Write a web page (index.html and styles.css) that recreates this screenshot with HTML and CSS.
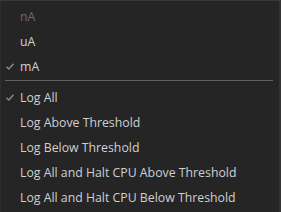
FILE: index.html
```html
<!DOCTYPE html>
<html lang="en">
<head>
  <meta charset="UTF-8">
  <title>Menu</title>
  <link rel="stylesheet" href="styles.css">
</head>
<body>
  <div class="menu">
    <div class="item disabled"><span class="check"></span>nA</div>
    <div class="item"><span class="check"></span>uA</div>
    <div class="item"><span class="check"><svg width="8" height="7" viewBox="0 0 8 7"><polyline points="0.5,3.8 2.8,6 7.5,0.8" fill="none" stroke="#8c8c8c" stroke-width="1.3"/></svg></span>mA</div>
    <div class="sep"></div>
    <div class="item"><span class="check"><svg width="8" height="7" viewBox="0 0 8 7"><polyline points="0.5,3.8 2.8,6 7.5,0.8" fill="none" stroke="#8c8c8c" stroke-width="1.3"/></svg></span>Log All</div>
    <div class="item"><span class="check"></span>Log Above Threshold</div>
    <div class="item"><span class="check"></span>Log Below Threshold</div>
    <div class="item"><span class="check"></span>Log All and Halt CPU Above Threshold</div>
    <div class="item"><span class="check"></span>Log All and Halt CPU Below Threshold</div>
  </div>
</body>
</html>
```

FILE: styles.css
```css
* {
  margin: 0;
  padding: 0;
  box-sizing: border-box;
}
body {
  background-color: #1e1e1e;
  font-family: 'Open Sans', sans-serif;
  font-size: 12.3px;
  color: #d0d0d0;
}
.menu {
  width: 281px;
  height: 212px;
  background-color: #252526;
  border-top: 1px solid #3a3a3a;
  border-left: 1px solid #2e2e2e;
  border-right: 2px solid #333333;
  padding-top: 3px;
}
.item {
  display: flex;
  align-items: center;
  height: 25px;
}
.check {
  display: flex;
  align-items: center;
  width: 19px;
  padding-left: 5px;
}
.disabled {
  color: #6b6b6b;
}
.sep {
  height: 1px;
  margin: 1px 6px 4px 4px;
  background-color: #626262;
}
```
